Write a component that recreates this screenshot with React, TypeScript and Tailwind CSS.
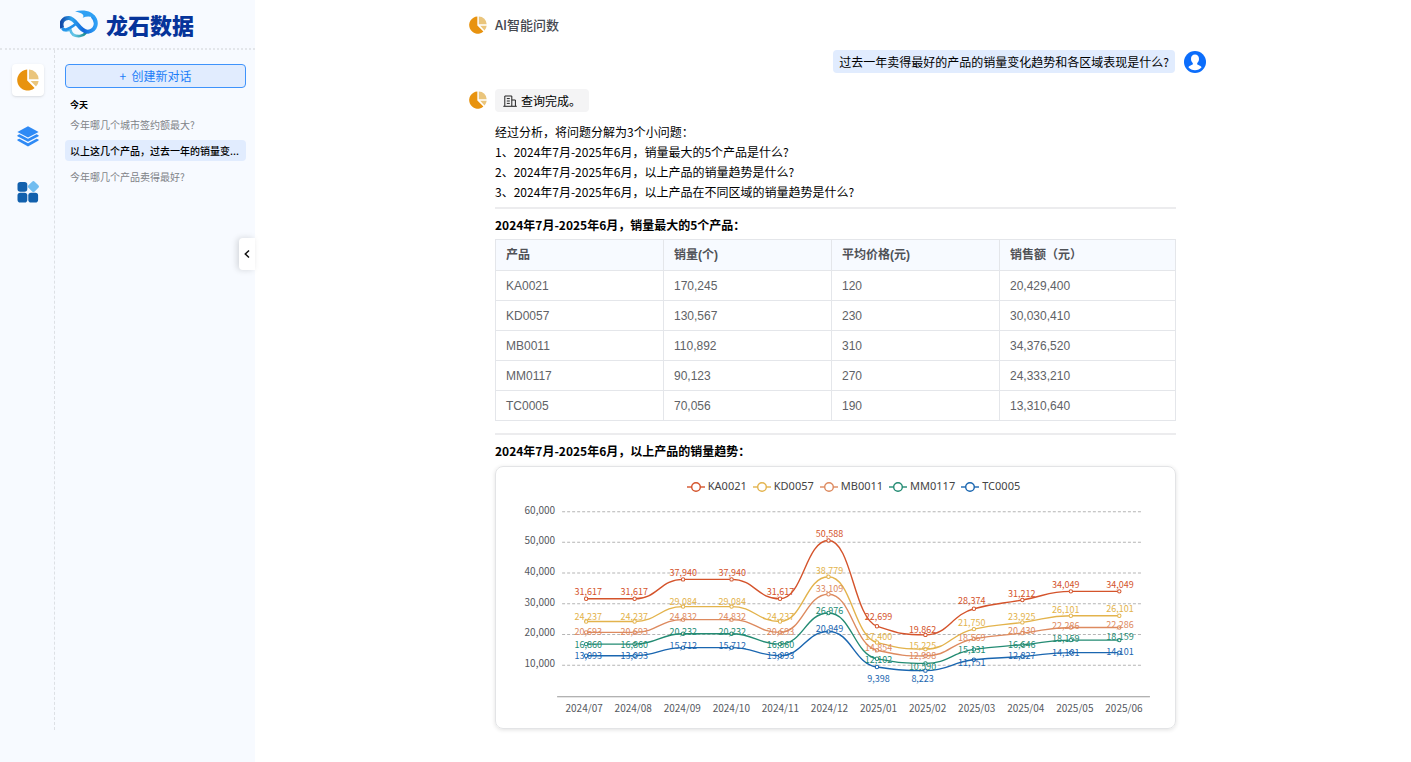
import type { ReactNode } from "react";

const categories = [
  "2024/07", "2024/08", "2024/09", "2024/10", "2024/11", "2024/12",
  "2025/01", "2025/02", "2025/03", "2025/04", "2025/05", "2025/06"
];

// labelY is the vertical centre of each value label inside the plot
const series = [
  {
    name: "KA0021",
    color: "#d4532b",
    values: [31617, 31617, 37940, 37940, 31617, 50588, 22699, 19862, 28374, 31212, 34049, 34049],
    labelY: [90, 90, 71, 71, 90, 32, 115, 128, 99, 92, 83, 83]
  },
  {
    name: "KD0057",
    color: "#e3b34c",
    values: [24237, 24237, 29084, 29084, 24237, 38779, 17400, 15225, 21750, 23925, 26101, 26101],
    labelY: [115, 115, 100, 100, 115, 69, 135, 144, 121, 115, 108, 107]
  },
  {
    name: "MB0011",
    color: "#dd8a5f",
    values: [20693, 20693, 24832, 24832, 20693, 33109, 14854, 12998, 18569, 20430, 22286, 22286],
    labelY: [130, 130, 115, 115, 130, 87, 146, 154, 136, 129, 124, 123]
  },
  {
    name: "MM0117",
    color: "#238b73",
    values: [16860, 16860, 20232, 20232, 16860, 26976, 12102, 10590, 15131, 16646, 18159, 18159],
    labelY: [143, 143, 130, 130, 143, 109, 158, 165, 148, 143, 137, 135]
  },
  {
    name: "TC0005",
    color: "#1a66b0",
    values: [13093, 13093, 15712, 15712, 13093, 20949, 9398, 8223, 11751, 12827, 14101, 14101],
    labelY: [154, 154, 144, 144, 154, 127, 177, 177, 161, 154, 151, 150]
  }
];

const labelX = [92, 138, 187, 236, 284, 333, 382, 426, 475, 525, 569, 623];

const rows = [
  ["KA0021", "170,245", "120", "20,429,400"],
  ["KD0057", "130,567", "230", "30,030,410"],
  ["MB0011", "110,892", "310", "34,376,520"],
  ["MM0117", "90,123", "270", "24,333,210"],
  ["TC0005", "70,056", "190", "13,310,640"]
];

const history = [
  { title: "今年哪几个城市签约额最大?", active: false },
  { title: "以上这几个产品，过去一年的销量变...", active: true },
  { title: "今年哪几个产品卖得最好?", active: false }
];

const questions = [
  "1、2024年7月-2025年6月，销量最大的5个产品是什么?",
  "2、2024年7月-2025年6月，以上产品的销量趋势是什么?",
  "3、2024年7月-2025年6月，以上产品在不同区域的销量趋势是什么?"
];

const pointX = (i: number) => 90 + i * 48.4;
const pointY = (value: number) => 193.6 - (value / 10000) * 30.66;

// Monotone cubic, so the curve never overshoots a data point
function smoothPath(values: number[]) {
  const pts = values.map((v, i) => [pointX(i), pointY(v)]);
  const slopes = pts.slice(1).map((p, i) => (p[1] - pts[i][1]) / (p[0] - pts[i][0]));
  const tangents = pts.map((_, i) => {
    if (i === 0 || i === pts.length - 1) return 0;
    const a = slopes[i - 1];
    const b = slopes[i];
    return a * b <= 0 ? 0 : (2 * a * b) / (a + b);
  });
  let d = `M${pts[0][0]},${pts[0][1]}`;
  for (let i = 1; i < pts.length; i++) {
    const [x0, y0] = pts[i - 1];
    const [x1, y1] = pts[i];
    const h = (x1 - x0) / 2.1;
    d += `C${x0 + h},${y0 + h * tangents[i - 1]} ${x1 - h},${y1 - h * tangents[i]} ${x1},${y1}`;
  }
  return d;
}

function PieIcon({ className }: { className: string }) {
  return (
    <svg viewBox="0 0 22 22" className={className} aria-hidden="true">
      <path d="M10.2 0.6A10.5 10.5 0 1 0 17.6 19L10.2 11.6Z" fill="#e8930f" />
      <path d="M12 0.6A9.8 9.8 0 0 1 21.6 10.2H12Z" fill="#eac57c" />
      <path d="M13.6 12H21.6A9.8 9.8 0 0 1 19 17.6Z" fill="#eac57c" />
    </svg>
  );
}

function LayersIcon() {
  return (
    <svg viewBox="0 0 22 21" className="h-[21px] w-[22px]" fill="#2f8af5" aria-hidden="true">
      <path d="M11 0.3 21.6 5.9 11 11.4 0.4 5.9Z" />
      <path d="M0.4 9.2 2.5 8.3 11 12.8 19.5 8.3 21.6 9.2V10.2L11 15.8 0.4 10.2Z" />
      <path d="M0.4 13.6 2.5 12.7 11 17.2 19.5 12.7 21.6 13.6V14.6L11 20.5 0.4 14.6Z" />
    </svg>
  );
}

function AppsIcon() {
  return (
    <svg viewBox="0 0 22 22" className="size-[22px]" aria-hidden="true">
      <rect x="0.5" y="1" width="9.8" height="9.8" rx="2.8" fill="#1260ad" />
      <rect x="0.5" y="11.8" width="9.8" height="9.8" rx="2.8" fill="#1260ad" />
      <rect x="11.3" y="11.8" width="9.8" height="9.8" rx="2.8" fill="#1260ad" />
      <rect x="12" y="1.2" width="8.8" height="8.8" rx="1.8" fill="#72bdf0" transform="rotate(45 16.4 5.6)" />
    </svg>
  );
}

function LogoMark() {
  return (
    <svg viewBox="12 10 114 84" className="h-7 w-[38px]" fill="none" aria-hidden="true">
      <defs>
        <linearGradient id="swoosh" x1="0" y1="0" x2="1" y2="0">
          <stop offset="0" stopColor="#1149a8" />
          <stop offset="0.3" stopColor="#2fa4ee" />
          <stop offset="0.65" stopColor="#1268dc" />
          <stop offset="1" stopColor="#2f9ff5" />
        </linearGradient>
        <linearGradient id="base" x1="0" y1="0" x2="1" y2="0">
          <stop offset="0" stopColor="#2d9df0" />
          <stop offset="0.5" stopColor="#67c7e6" />
          <stop offset="1" stopColor="#168a8c" />
        </linearGradient>
      </defs>
      <path d="M19 66C25 75 34 71 43 69 46 84 58 89 72 88 80 87 86 83 90 78" stroke="url(#base)" strokeWidth="8" />
      <path d="M19 64C11 46 24 33 39 34 61 35 70 76 96 75 120 72 127 46 109 28" stroke="url(#swoosh)" strokeWidth="12" />
      <path d="M19 64C24 72 35 68 43 63 50 59 55 56 60 51" stroke="#2290ea" strokeWidth="8" />
      <path d="M57 14C80 9 114 10 122 40 108 27 94 27 80 33 88 24 74 18 57 14Z" fill="#2fa0f4" />
    </svg>
  );
}

function UserIcon() {
  return (
    <svg viewBox="0 0 22 22" className="size-[22px] shrink-0" aria-label="用户">
      <circle cx="11" cy="11" r="11" fill="#0b6dfb" />
      <path
        d="M11 3.6c-2.5 0-4 1.9-4 4.3 0 1.7.7 3.2 1.8 4.1v1.2c-.2.7-3.9 1.4-4.4 3.1 1.6 1.9 4 3 6.6 3s5-1.1 6.6-3c-.5-1.7-4.2-2.4-4.4-3.1V12c1.1-.9 1.8-2.4 1.8-4.1 0-2.4-1.5-4.3-4-4.3Z"
        fill="#fff"
      />
    </svg>
  );
}

function ReportIcon() {
  return (
    <svg viewBox="0 0 14 12" className="h-3 w-3.5" fill="none" stroke="#222" aria-hidden="true">
      <path d="M1.8 11V1H8.8V11M8.8 5H12.4V11M0.3 11.3H13.8M3.8 3.6H6.8M3.8 6H6.8M3.8 8.4H6.8" />
    </svg>
  );
}

function SectionTitle({ children }: { children: ReactNode }) {
  return <h2 className="text-[12px] leading-5 font-bold text-black">{children}</h2>;
}

function Sidebar() {
  return (
    <aside className="relative flex w-[255px] shrink-0 flex-col bg-[#f7faff] pb-8">
      <div className="flex h-[50px] items-center gap-2 border-b-2 border-dotted border-[#e3e6ea] pl-[60px]">
        <LogoMark />
        <span className="text-[22px] leading-none font-black text-[#06349a]">龙石数据</span>
      </div>
      <div className="flex flex-1">
        <nav className="flex w-[55px] flex-col items-center gap-6 border-r border-dashed border-[#dde0e5] pt-3.5 pl-0.5">
          <button aria-label="智能问数" className="grid size-8 place-items-center rounded-sm bg-white shadow-sm">
            <PieIcon className="size-[22px]" />
          </button>
          <button aria-label="数据集" className="grid size-8 place-items-center">
            <LayersIcon />
          </button>
          <button aria-label="应用" className="grid size-8 place-items-center">
            <AppsIcon />
          </button>
        </nav>
        <div className="flex-1 pt-3.5 pr-[9px] pl-2.5">
          <button className="block h-6 w-full rounded border border-[#3f93fb] bg-[#e1ecfe] text-[12px] leading-5 text-[#1a7df8]">
            +&nbsp; 创建新对话
          </button>
          <h3 className="mt-2 px-[5px] text-[9px] leading-[18px] font-bold text-black">今天</h3>
          <ul className="flex flex-col gap-[5px]">
            {history.map((item) => (
              <li key={item.title}>
                <a
                  href="#"
                  className={
                    item.active
                      ? "block rounded bg-[#e1ecfe] px-[5px] text-[10px] leading-[21px] font-medium whitespace-nowrap text-black"
                      : "block rounded px-[5px] text-[10px] leading-[21px] whitespace-nowrap text-[#808388]"
                  }
                >
                  {item.title}
                </a>
              </li>
            ))}
          </ul>
        </div>
      </div>
      <button
        aria-label="收起"
        className="absolute top-[238px] right-0 grid h-8 w-4 place-items-center rounded-l bg-white shadow-[-2px_0_6px_rgba(0,0,0,0.14)]"
      >
        <svg viewBox="0 0 6 10" className="h-2.5 w-1.5" fill="none" stroke="#111" strokeWidth="1.5" aria-hidden="true">
          <path d="M5 1.5 1.3 5 5 8.5" />
        </svg>
      </button>
    </aside>
  );
}

function TrendChart() {
  return (
    <div className="rounded-lg border border-[#e3e4e6] pb-1.5 shadow-[0_1px_4px_rgba(0,0,0,0.12)]">
      <ul className="flex h-[35px] items-center justify-center gap-1.5 pt-1 pl-9 font-['Noto_Sans','Noto_Sans_CJK_SC',sans-serif] text-[11px] text-[#444]">
        {series.map((s) => (
          <li key={s.name} className="flex items-center gap-[3px]">
            <svg viewBox="0 0 18 12" className="h-3 w-[18px]" stroke={s.color} fill="#fff" aria-hidden="true">
              <path d="M0 6H18" strokeWidth="1.4" />
              <circle cx="9" cy="6" r="4.3" strokeWidth="1.4" />
            </svg>
            {s.name}
          </li>
        ))}
      </ul>
      <svg viewBox="0 0 678 220" className="block w-full" role="img" aria-label="销量趋势">
        {[60, 50, 40, 30, 20, 10].map((tick) => (
          <g key={tick}>
            <path d={`M66 ${pointY(tick * 1000)}H646`} stroke="#b5b5b5" strokeDasharray="3 2" />
            <text x="59" y={pointY(tick * 1000) + 2} textAnchor="end" fontSize="10" fill="#55585e">
              {tick},000
            </text>
          </g>
        ))}
        <path d="M61 194.5H653" stroke="#999" />
        {categories.map((label, i) => (
          <text key={label} x={88 + i * 49} y="210" textAnchor="middle" fontSize="10" fill="#55585e">
            {label}
          </text>
        ))}
        {series.map((s) => (
          <g key={s.name}>
            <path d={smoothPath(s.values)} fill="none" stroke={s.color} strokeWidth="1.4" />
            {s.values.map((value, i) => (
              <circle key={i} cx={pointX(i)} cy={pointY(value)} r="1.7" fill="#fff" stroke={s.color} />
            ))}
          </g>
        ))}
        {series.map((s) => (
          <g key={s.name} fontSize="9" textAnchor="middle" fill={s.color}>
            {s.values.map((value, i) => (
              <text key={i} x={labelX[i]} y={s.labelY[i] + 3}>
                {value.toLocaleString("en-US")}
              </text>
            ))}
          </g>
        ))}
      </svg>
    </div>
  );
}

function Answer() {
  return (
    <div className="w-[681px] min-w-0">
      <p className="flex h-[23px] w-fit items-center gap-1 rounded bg-[#f4f4f5] px-2 text-[12px] text-black">
        <ReportIcon />
        查询完成。
      </p>
      <div className="mt-2.5 text-[12px] leading-5 text-black">
        <p>经过分析，将问题分解为3个小问题：</p>
        {questions.map((q) => (
          <p key={q}>{q}</p>
        ))}
      </div>
      <hr className="mt-[5px] mb-1.5 border-t-2 border-[#ececee]" />
      <SectionTitle>2024年7月-2025年6月，销量最大的5个产品：</SectionTitle>
      <table className="mt-1 w-full table-fixed border-collapse text-left font-['Liberation_Sans','Noto_Sans_CJK_SC',sans-serif] text-[12px] text-[#606266]">
        <colgroup>
          <col className="w-[168px]" />
          <col className="w-[168px]" />
          <col className="w-[168px]" />
          <col />
        </colgroup>
        <thead>
          <tr className="h-[31px] bg-[#f7faff] text-[#505257]">
            {["产品", "销量(个)", "平均价格(元)", "销售额（元）"].map((head) => (
              <th key={head} className="border border-[#e4e6ea] px-2.5 font-bold">
                {head}
              </th>
            ))}
          </tr>
        </thead>
        <tbody>
          {rows.map((row) => (
            <tr key={row[0]} className="h-[30px]">
              {row.map((cell) => (
                <td key={cell} className="border border-[#e4e6ea] px-2.5">
                  {cell}
                </td>
              ))}
            </tr>
          ))}
        </tbody>
      </table>
      <hr className="mt-3 mb-1.5 border-t-2 border-[#ececee]" />
      <div className="mb-[5px]">
        <SectionTitle>2024年7月-2025年6月，以上产品的销量趋势：</SectionTitle>
      </div>
      <TrendChart />
    </div>
  );
}

export default function App() {
  return (
    <div className="flex min-h-screen bg-white font-['Noto_Sans_CJK_SC',sans-serif]">
      <Sidebar />
      <main className="flex-1 pt-[15px] pb-8 pl-[9px]">
        <div className="mx-auto max-w-[737px]">
          <header className="flex items-center gap-2">
            <PieIcon className="size-[18px]" />
            <h1 className="text-[13px] leading-5 font-medium text-[#45484f]">AI智能问数</h1>
          </header>
          <div className="mt-[15px] flex items-center justify-end gap-[9px]">
            <p className="rounded bg-[#e1ecfe] px-1.5 text-[12px] leading-[23px] text-black">
              过去一年卖得最好的产品的销量变化趋势和各区域表现是什么?
            </p>
            <UserIcon />
          </div>
          <div className="mt-4 flex items-start gap-2">
            <PieIcon className="mt-0.5 size-[18px] shrink-0" />
            <Answer />
          </div>
        </div>
      </main>
    </div>
  );
}
